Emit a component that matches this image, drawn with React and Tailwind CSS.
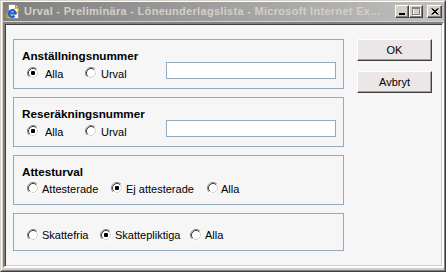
const FONT = { fontFamily: '"Liberation Sans", Arial, sans-serif' };

function Radio({ checked }) {
  return (
    <svg width="12" height="12" viewBox="0 0 12 12" className="shrink-0 mb-[2px]">
      <circle cx="6" cy="6" r="5" fill="#fff" />
      <path d="M2.11 9.89 A5.5 5.5 0 0 1 9.89 2.11" fill="none" stroke="#808080" />
      <path d="M9.89 2.11 A5.5 5.5 0 0 1 2.11 9.89" fill="none" stroke="#fff" />
      <path d="M2.82 9.18 A4.5 4.5 0 0 1 9.18 2.82" fill="none" stroke="#404040" />
      <path d="M9.18 2.82 A4.5 4.5 0 0 1 2.82 9.18" fill="none" stroke="#d4d0c8" />
      {checked && <rect x="4" y="4" width="4" height="4" rx="1" fill="#000" />}
    </svg>
  );
}

function Option({ label, checked, width, gap = 3 }) {
  return (
    <div className="flex items-center shrink-0" style={{ width }}>
      <Radio checked={checked} />
      <span className="text-[11px] leading-[13px] text-black whitespace-nowrap" style={{ marginLeft: gap }}>
        {label}
      </span>
    </div>
  );
}

function Box({ title, children, className = '' }) {
  return (
    <div className={`border border-[#94aabf] pl-2 ${className}`}>
      {title && (
        <div className="h-[12px] text-[11.7px] leading-[12px] font-bold text-black whitespace-nowrap">
          {title}
        </div>
      )}
      {children}
    </div>
  );
}

function NumberRow() {
  return (
    <div className="flex items-start h-[17px] pl-[5px]">
      <div className="mt-[5px] flex">
        <Option label="Alla" checked width={58} gap={6} />
        <Option label="Urval" width={81} gap={4} />
      </div>
      <div className="w-[170px] h-[17px] bg-white border border-[#94aabf]" />
    </div>
  );
}

function IeIcon() {
  return (
    <svg width="16" height="16" viewBox="0 0 16 16">
      <path d="M3.5 0.5h7l3 3v11h-10z" fill="#fff" stroke="#909090" />
      <path d="M10.5 0.5v3h3" fill="none" stroke="#909090" />
      <ellipse cx="7.5" cy="9" rx="7" ry="2.6" fill="none" stroke="#e8a820" strokeWidth="1.2" transform="rotate(-35 7.5 9)" />
      <path d="M4.2 9.3h6.4 a3.3 3.3 0 1 0 -1 2.6" fill="none" stroke="#1a5fd0" strokeWidth="2.2" />
    </svg>
  );
}

function CapButton({ children, className = '' }) {
  return (
    <div
      className={`w-[14px] h-[13px] bg-[#d4d0c8] border border-t-white border-l-white border-r-[#404040] border-b-[#404040] shadow-[inset_-1px_-1px_0_#808080] flex items-center justify-center ${className}`}
    >
      {children}
    </div>
  );
}

function WinButton({ label }) {
  return (
    <div className="w-[75px] h-[22px] bg-[#ebe7e6] border border-t-white border-l-white border-r-[#404040] border-b-[#404040] shadow-[inset_-1px_-1px_0_#a0a0a0] flex items-center justify-center text-[11px] text-black">
      {label}
    </div>
  );
}

export default function App() {
  return (
    <div
      className="w-[446px] h-[272px] bg-[#d4d0c8] border border-t-[#d4d0c8] border-l-[#d4d0c8] border-r-[#404040] border-b-[#404040]"
      style={FONT}
    >
      <div className="h-full border border-t-white border-l-white border-r-[#808080] border-b-[#808080] pl-[1px] pb-[2px] flex flex-col">
        {/* title bar */}
        <div className="h-[19px] flex items-center bg-gradient-to-r from-[#808080] to-[#c0c0c0] pl-[2px] pr-[2px]">
          <IeIcon />
          <span className="ml-[3px] text-[11px] leading-[19px] font-bold tracking-[0.3px] text-[#d4d0c8] whitespace-nowrap flex-1 overflow-hidden">
            Urval - Preliminära - Löneunderlagslista - Microsoft Internet Ex...
          </span>
          <CapButton>
            <div className="w-[6px] h-[2px] bg-black mt-[5px] mr-[1px]" />
          </CapButton>
          <CapButton>
            <svg width="9" height="9" viewBox="0 0 9 9">
              <rect x="1.5" y="1.5" width="7" height="7" fill="none" stroke="#fff" />
              <rect x="0.5" y="0.5" width="7" height="7" fill="none" stroke="#808080" />
              <rect x="0" y="0" width="8" height="2" fill="#808080" />
            </svg>
          </CapButton>
          <CapButton className="ml-[4px] w-[15px]">
            <svg width="8" height="7" viewBox="0 0 8 7">
              <path d="M0.5 0.5l6 6M1.5 0.5l6 6M6.5 0.5l-6 6M7.5 0.5l-6 6" stroke="#000" strokeWidth="1" />
            </svg>
          </CapButton>
        </div>

        {/* client area */}
        <div className="mt-[1px] flex-1 border-2 border-t-[#808080] border-l-[#808080] border-r-white border-b-white">
          <div className="h-full bg-[#f6f6f6] flex pt-[15px] pl-2 shadow-[inset_1px_1px_0_#404040,inset_-1px_-1px_0_#d4d0c8]">
            <div className="w-[331px] flex flex-col gap-2">
              <Box title="Anställningsnummer" className="pt-[10px] pb-[9px]">
                <NumberRow />
              </Box>
              <Box title="Reseräkningsnummer" className="pt-[10px] pb-[9px]">
                <NumberRow />
              </Box>
              <Box title="Attesturval" className="pt-[10px] pb-[9px]">
                <div className="h-[17px] pl-[5px] pt-[5px] flex">
                  <Option label="Attesterade" width={84} />
                  <Option label="Ej attesterade" checked width={96} />
                  <Option label="Alla" width={40} gap={2} />
                </div>
              </Box>
              <Box className="pt-[15px] pb-[8px]">
                <div className="h-[13px] pl-[5px] flex">
                  <Option label="Skattefria" width={73} />
                  <Option label="Skattepliktiga" checked width={90} />
                  <Option label="Alla" width={40} />
                </div>
              </Box>
            </div>
            <div className="ml-[13px] flex flex-col gap-[10px]">
              <WinButton label="OK" />
              <WinButton label="Avbryt" />
            </div>
          </div>
        </div>
      </div>
    </div>
  );
}
